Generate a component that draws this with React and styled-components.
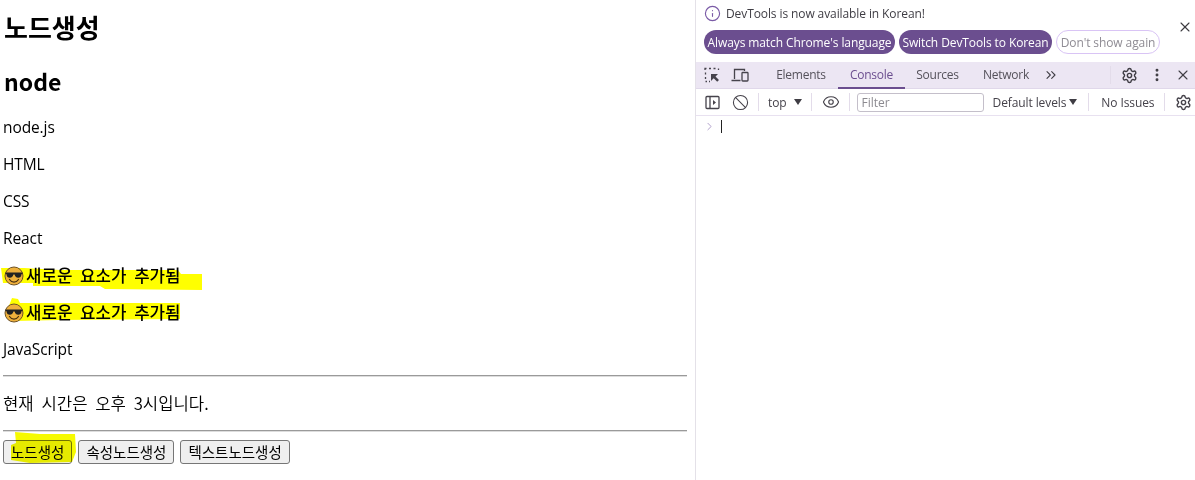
import React from "react";
import styled, { createGlobalStyle } from "styled-components";
import { Ban, ChevronRight, ChevronsRight, EllipsisVertical, Eye, Info, Settings, X } from "lucide-react";

const Global = createGlobalStyle`
  html, body { margin: 0; padding: 0; background: #fff; overflow: hidden; }
  body { font-family: "Noto Sans CJK KR", "Noto Sans", sans-serif; color: #000; }
`;
const Screen = styled.div`display: flex; width: 1195px; height: 480px;`;
const Page = styled.main`
  position: relative; width: 695px; height: 480px; box-sizing: border-box; padding: 0 8px 0 3px; flex: none;
  font-family: "Open Sans", "Noto Sans CJK KR", sans-serif;
`;
const Heading = styled.h1`
  font-size: ${p => p.$size}px; line-height: 32px; font-weight: 700; margin: ${p => p.$top}px 0 ${p => p.$bottom}px;
  font-family: "Noto Sans CJK KR", sans-serif; padding-left: ${p => p.$inset || 0}px;
`;
const Line = styled.p`
  position: relative; z-index: 1; margin: 0 0 16px; font-size: 15.5px; line-height: 21px; height: 21px;
  font-family: "Open Sans", "Noto Sans CJK KR", sans-serif; letter-spacing: -0.1px;
`;
const Added = styled(Line)`
  display: flex; align-items: center; font-weight: 500; font-size: 16.8px; font-family: "Noto Sans CJK KR", sans-serif;
  letter-spacing: 0; word-spacing: 4px; gap: 2px; padding-left: 1px; white-space: nowrap;
`;
const Rule = styled.hr`
  margin: ${p => p.$top}px 0 ${p => p.$bottom}px; border: 0; border-top: 1px solid #9a9a9a; border-bottom: 1px solid #ddd;
`;
const Korean = styled(Line)`font-family: "Noto Sans CJK KR", sans-serif; font-size: 16.7px; letter-spacing: 0; word-spacing: 4px; font-weight: 350;`;
const Buttons = styled.div`position: relative; z-index: 1; display: flex; gap: 6px;`;
const PageButton = styled.button`
  height: 24px; box-sizing: border-box; padding: 0 7px; border: 1px solid #767676; border-radius: 3px;
  background: #efefef; color: #000; font: 14.5px "Noto Sans CJK KR", sans-serif; line-height: 20px; white-space: nowrap;
`;
const Marker = styled.svg`position: absolute; left: 0; top: 0; width: 695px; height: 480px; z-index: ${p => p.$top ? 2 : 0}; pointer-events: none; mix-blend-mode: multiply;`;

const Tools = styled.aside`
  width: 500px; flex: none; height: 480px; border-left: 1px solid #e4e1e8; box-sizing: border-box;
  font-family: "Open Sans", "Noto Sans", sans-serif; font-size: 12px; color: #45424a; position: relative;
`;
const InfoBar = styled.div`height: 62px; box-sizing: border-box; padding: 5px 0 0 8px;`;
const Message = styled.div`display: flex; align-items: center; gap: 5px; height: 17px; color: #3f3d44; letter-spacing: -0.1px; svg { color: #7a5aa6; }`;
const Actions = styled.div`display: flex; gap: 4px; margin-top: 8px;`;
const Pill = styled.span`
  height: 24px; box-sizing: border-box; display: flex; align-items: center; justify-content: center; width: ${p => p.$w}px;
  border-radius: 12px; font-size: 12px; white-space: nowrap; letter-spacing: -0.1px;
  background: ${p => p.$ghost ? "#fff" : "#6b4e8f"}; color: ${p => p.$ghost ? "#8f8c94" : "#fff"};
  border: ${p => p.$ghost ? "1px solid #d9c4f5" : "0"};
`;
const CloseInfo = styled.span`position: absolute; left: 481px; top: 19px; display: flex; color: #3c3a40;`;
const TabBar = styled.div`display: flex; align-items: center; height: 27px; background: #ece6f3; box-sizing: border-box; border-bottom: 1px solid #e0d8ea; color: #3f3d44;`;
const IconSlot = styled.span`display: flex; align-items: center; justify-content: center; width: ${p => p.$w || 28}px; margin-left: ${p => p.$ml || 0}px; flex: none;`;
const Tab = styled.span`
  height: 27px; box-sizing: border-box; display: flex; align-items: center; justify-content: center; width: ${p => p.$w}px;
  margin-left: ${p => p.$ml || 0}px; white-space: nowrap; letter-spacing: -0.25px; color: ${p => p.$active ? "#6b4e8f" : "#55525b"};
  border-bottom: 2px solid ${p => p.$active ? "#6b4e8f" : "transparent"};
`;
const Sep = styled.i`display: block; flex: none; width: 1px; height: 18px; background: #e3dcea; margin-left: ${p => p.$ml || 0}px;`;
const ToolRow = styled.div`display: flex; align-items: center; height: 27px; box-sizing: border-box; border-bottom: 1px solid #e8e1f0; background: #fff;`;
const Label = styled.span`display: flex; align-items: center; white-space: nowrap; margin-left: ${p => p.$ml || 0}px; letter-spacing: -0.1px;`;
const Caret = styled.b`display: block; flex: none; width: 0; height: 0; margin-left: ${p => p.$ml}px; border: 4px solid transparent; border-top: 6px solid #3f3d44; border-bottom: 0;`;
const Filter = styled.span`
  display: flex; align-items: center; width: 127px; height: 19px; box-sizing: border-box; margin-left: 7px; padding-left: 4px;
  border: 1px solid #c4bfca; border-radius: 3px; color: #8c8a90;
`;
const Prompt = styled.div`display: flex; align-items: center; height: 22px; margin-top: -1px; padding-left: 7px; color: #a08cc0;`;
const Cursor = styled.i`display: block; width: 1px; height: 13px; background: #222; margin-left: 5px;`;

const Shades = () => (
  <svg width="20" height="20" viewBox="0 0 20 20" style={{ flex: "none" }}>
    <circle cx="10" cy="10" r="9" fill="#eeb03c" stroke="#6e5226" strokeWidth="1" />
    <path d="M1.500 6.500h17v1.500l-1 .3c-.3 2.600-1.400 3.500-3.300 3.500-2.100 0-3.200-1.300-3.600-3.200h-1.200C9 10.500 7.900 11.800 5.800 11.800 3.900 11.800 2.800 10.900 2.500 8.300l-1-.3z" fill="#222" />
    <path d="M5.500 13.500c1.100 1.700 2.800 2.600 4.500 2.600s3.400-.9 4.500-2.600" fill="none" stroke="#4a3210" strokeWidth="1.300" strokeLinecap="round" />
  </svg>
);
const Inspect = () => (
  <svg width="16" height="16" viewBox="0 0 16 16" fill="none" stroke="#46434c">
    <path d="M1 3V1.500h1.500M5 1.500h2M9.500 1.500h2M14.500 1.500v1.500M1.500 5.500v2M1.500 10v2M1.500 14.500H3M5 14.500h1" strokeWidth="1.300" />
    <path d="M7 7h7l-2.500 2.500L15 13l-1.800 1.800-3.500-3.500L7 14z" fill="#46434c" stroke="none" />
  </svg>
);
const Device = () => (
  <svg width="18" height="16" viewBox="0 0 18 16" fill="none" stroke="#46434c" strokeWidth="1.300">
    <path d="M3.500 12V2.500h10V4M.5 13.500h9" />
    <rect x="11" y="5.500" width="6" height="8.500" rx=".8" />
  </svg>
);
const SidePanel = () => (
  <svg width="15" height="15" viewBox="0 0 15 15" fill="none" stroke="#46434c" strokeWidth="1.300">
    <rect x="1" y="1.500" width="13" height="12" rx="1" />
    <path d="M5 1.500v12" />
    <path d="M8 5l3 2.500L8 10z" fill="#46434c" stroke="none" />
  </svg>
);

export default function App() {
  return (
    <Screen>
      <Global />
      <Page>
        <Marker aria-hidden="true">
          <path d="M1 268 L24 268 L60 270 L178 270 L181 274 L202 274 L202 290 L105 289 L100 286 L33 286 L33 283 L3 283 Z" fill="#ffff00" />
          <path d="M12 298 L18 299 L20 303 L180 303 L180 319 L60 320 L14 321 L5 316 Z" fill="#ffff00" />
        </Marker>
        <Heading $top={11} $size={26} $bottom={22} $inset={1}>노드생성</Heading>
        <Heading $top={0} $size={23} $bottom={20} $inset={1}>node</Heading>
        <Line>node.js</Line>
        <Line>HTML</Line>
        <Line>CSS</Line>
        <Line>React</Line>
        <Added><Shades />새로운 요소가 추가됨</Added>
        <Added><Shades />새로운 요소가 추가됨</Added>
        <Line>JavaScript</Line>
        <Rule $top={-1} $bottom={16} />
        <Korean>현재 시간은 오후 3시입니다.</Korean>
        <Rule $top={0} $bottom={8} />
        <Buttons>
          <PageButton>노드생성</PageButton>
          <PageButton>속성노드생성</PageButton>
          <PageButton>텍스트노드생성</PageButton>
        </Buttons>
        <Marker $top aria-hidden="true">
          <path d="M15 432 L40 434 L75 434 L76 452 L72 462 L30 463 L11 460 L11 445 L16 443 Z" fill="#f6fa00" />
        </Marker>
      </Page>
      <Tools>
        <InfoBar>
          <Message><Info size={17} strokeWidth={1.6} />DevTools is now available in Korean!</Message>
          <Actions>
            <Pill $w={191}>Always match Chrome's language</Pill>
            <Pill $w={153}>Switch DevTools to Korean</Pill>
            <Pill $w={104} $ghost>Don't show again</Pill>
          </Actions>
        </InfoBar>
        <CloseInfo><X size={16} strokeWidth={1.6} /></CloseInfo>
        <TabBar>
          <IconSlot $w={18} $ml={7}><Inspect /></IconSlot>
          <IconSlot $w={20} $ml={9}><Device /></IconSlot>
          <Tab $w={62} $ml={20}>Elements</Tab>
          <Tab $w={67} $ml={6} $active>Console</Tab>
          <Tab $w={65}>Sources</Tab>
          <Tab $w={70} $ml={1}>Network</Tab>
          <IconSlot $w={16} $ml={2}><ChevronsRight size={18} strokeWidth={1.6} /></IconSlot>
          <Sep $ml={51} />
          <IconSlot $w={18} $ml={9}><Settings size={17} strokeWidth={2} /></IconSlot>
          <IconSlot $w={18} $ml={10}><EllipsisVertical size={16} strokeWidth={2.4} /></IconSlot>
          <IconSlot $w={18} $ml={8}><X size={16} strokeWidth={1.6} /></IconSlot>
        </TabBar>
        <ToolRow>
          <IconSlot $w={16} $ml={8}><SidePanel /></IconSlot>
          <IconSlot $w={18} $ml={11}><Ban size={17} strokeWidth={1.5} /></IconSlot>
          <Sep $ml={9} />
          <Label $ml={9}>top</Label>
          <Caret $ml={7} />
          <Sep $ml={9} />
          <IconSlot $w={20} $ml={9}><Eye size={18} strokeWidth={1.5} /></IconSlot>
          <Sep $ml={8} />
          <Filter>Filter</Filter>
          <Label $ml={9}>Default levels</Label>
          <Caret $ml={3} />
          <Sep $ml={11} />
          <Label $ml={12}>No Issues</Label>
          <Sep $ml={10} />
          <IconSlot $w={18} $ml={9}><Settings size={17} strokeWidth={2} /></IconSlot>
        </ToolRow>
        <Prompt><ChevronRight size={13} strokeWidth={1.5} /><Cursor /></Prompt>
      </Tools>
    </Screen>
  );
}
